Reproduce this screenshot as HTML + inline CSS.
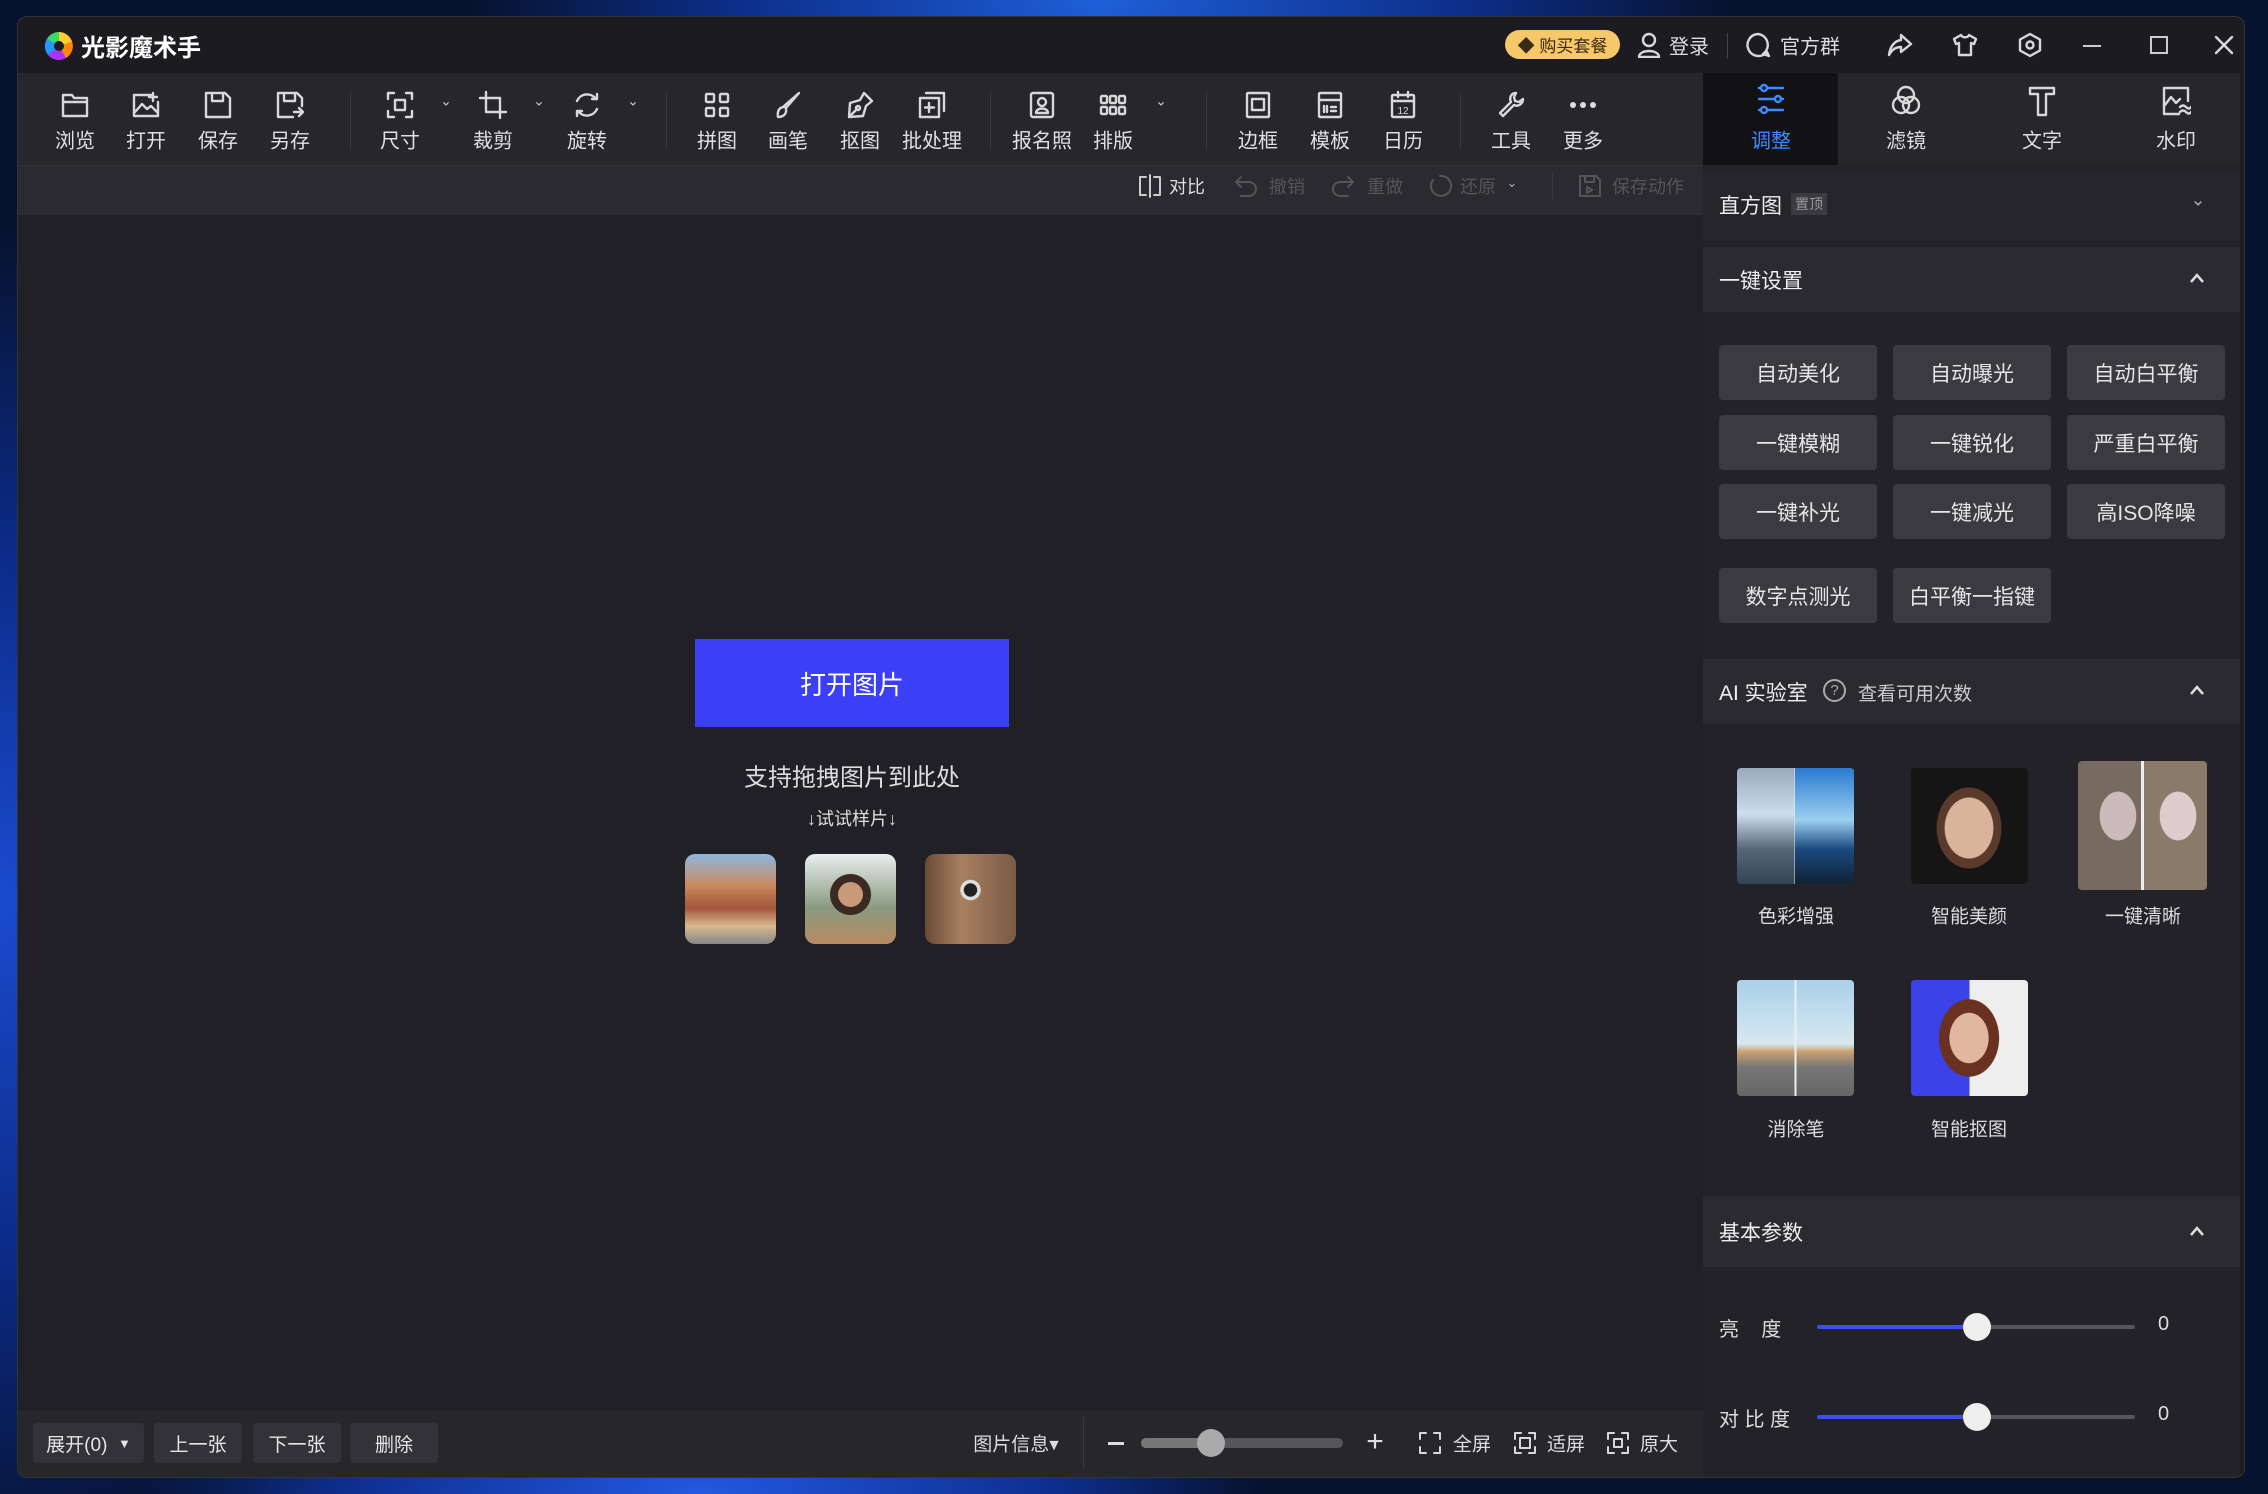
<!DOCTYPE html>
<html><head><meta charset="utf-8">
<style>
*{margin:0;padding:0;box-sizing:border-box}
body{width:2268px;height:1494px;overflow:hidden;position:relative;font-family:"Liberation Sans","Noto Sans CJK SC",sans-serif;color:#ddd;
background:radial-gradient(ellipse 900px 500px at 1100px 0px,#1e5fd8 0%,#0c2f8a 40%,transparent 70%),radial-gradient(ellipse 600px 900px at 0px 900px,#1a4bd0 0%,#0b2a85 40%,transparent 75%),radial-gradient(ellipse 700px 300px at 700px 1494px,#2358e0 0%,#0d2f90 50%,transparent 80%),#07122e;}
.a{position:absolute}
.c{position:absolute;transform:translate(-50%,-50%);white-space:nowrap}
.win{position:absolute;left:17px;top:16px;width:2228px;height:1462px;background:#1c1c20;border-radius:10px;overflow:hidden;border:1px solid #333}
svg{display:block}
.ic{stroke:#d8d8d8;fill:none;stroke-width:2.4;stroke-linecap:round;stroke-linejoin:round}
.lbl{font-size:20px;color:#e0e0e0}
.btn{position:absolute;width:158px;height:55px;background:#3a3a40;border-radius:4px;font-size:21px;color:#e6e6e6;display:flex;align-items:center;justify-content:center}
.hdr{position:absolute;left:0;width:537px;font-size:21px;color:#eee}
.bb{position:absolute;top:1406px;height:40px;background:#323238;border-radius:4px;font-size:19px;color:#e6e6e6;display:flex;align-items:center;justify-content:center}
.th{position:absolute;border-radius:4px;overflow:hidden}
</style></head><body>
<div class="win">
 <div class="a" style="left:0;top:0;width:2230px;height:56px;background:#1c1c20"></div>
 <svg class="a" style="left:26px;top:14px" width="30" height="30" viewBox="0 0 30 30">
  <circle cx="15" cy="15" r="14" fill="#f24"/>
  <path d="M15 15 L15 1 A14 14 0 0 1 28 11 Z" fill="#fc3"/>
  <path d="M15 15 L28 11 A14 14 0 0 1 22 27 Z" fill="#f80"/>
  <path d="M15 15 L22 27 A14 14 0 0 1 4 24 Z" fill="#a3f"/>
  <path d="M15 15 L4 24 A14 14 0 0 1 3 8 Z" fill="#29f"/>
  <path d="M15 15 L3 8 A14 14 0 0 1 15 1 Z" fill="#3d6"/>
  <circle cx="15" cy="15" r="5" fill="#1c1c20"/>
 </svg>
 <div class="a" style="left:63px;top:11px;font-size:24px;font-weight:bold;color:#fff">光影魔术手</div>
 <div class="a" style="left:1487px;top:13px;width:115px;height:29px;border-radius:15px;background:#f6c86a;color:#3a2a10;font-size:17px;display:flex;align-items:center;justify-content:center">◆ 购买套餐</div>
 <svg class="a ic" style="left:1619px;top:15px" width="24" height="26" viewBox="0 0 24 26"><circle cx="12" cy="8" r="6"/><path d="M2 25 C2 17 22 17 22 25 Z"/></svg>
 <div class="c" style="left:1671px;top:28px;font-size:20px">登录</div>
 <div class="a" style="left:1709px;top:16px;width:1px;height:26px;background:#444"></div>
 <svg class="a ic" style="left:1727px;top:15px" width="26" height="26" viewBox="0 0 26 26"><path d="M13 2 A11 11 0 1 0 22 20 L24 24 L18 22 A11 11 0 0 0 13 2"/></svg>
 <div class="c" style="left:1792px;top:28px;font-size:20px">官方群</div>
 <svg class="a ic" style="left:1869px;top:16px" width="26" height="24" viewBox="0 0 26 24"><path d="M14 2 L24 11 L14 19 L14 14 C8 14 5 17 2 22 C3 14 7 8 14 7 Z"/></svg>
 <svg class="a ic" style="left:1934px;top:16px" width="26" height="24" viewBox="0 0 26 24"><path d="M9 2 L2 6 L4 11 L7 10 L7 22 L19 22 L19 10 L22 11 L24 6 L17 2 C16 5 10 5 9 2Z"/></svg>
 <svg class="a ic" style="left:2000px;top:15px" width="24" height="26" viewBox="0 0 24 26"><path d="M12 2 L22 7.5 L22 18.5 L12 24 L2 18.5 L2 7.5 Z"/><circle cx="12" cy="13" r="3.5"/></svg>
 <div class="a" style="left:2065px;top:28px;width:18px;height:2px;background:#ccc"></div>
 <div class="a" style="left:2132px;top:19px;width:18px;height:18px;border:2px solid #ccc"></div>
 <svg class="a ic" style="left:2196px;top:18px" width="20" height="20" viewBox="0 0 20 20"><path d="M2 2 L18 18 M18 2 L2 18"/></svg>

 <div class="a" style="left:0;top:56px;width:1685px;height:92px;background:#26262b"></div>
 <div class="a" style="left:0;top:148px;width:1685px;height:50px;background:#2a2a30;border-top:1px solid #333"></div>
 <div class="a" style="left:0;top:198px;width:1685px;height:1196px;background:#202026"></div>
 <div class="a" style="left:0;top:1394px;width:1685px;height:68px;background:#26262b"></div>

 <svg class="a ic" style="left:42px;top:73px" width="30" height="30" viewBox="0 0 30 30"><path d="M3 5 H12 L14 8 H27 V26 H3 Z M3 12 H27"/></svg>
 <svg class="a ic" style="left:113px;top:73px" width="30" height="30" viewBox="0 0 30 30"><path d="M20 5 H3 V26 H27 V12 M22 3 V11 M18 7 H26 M4 22 L11 14 L16 19 L20 16 L26 22"/></svg>
 <svg class="a ic" style="left:185px;top:73px" width="30" height="30" viewBox="0 0 30 30"><path d="M3 3 H22 L27 8 V27 H3 Z M9 3 V11 H20 V3"/></svg>
 <svg class="a ic" style="left:257px;top:73px" width="30" height="30" viewBox="0 0 30 30"><path d="M18 27 H3 V3 H22 L27 8 V16 M9 3 V11 H20 V3 M19 22 H28 M24 18 L28 22 L24 26"/></svg>
 <div class="a" style="left:332px;top:76px;width:1px;height:56px;background:#3a3a40"></div>
 <svg class="a ic" style="left:367px;top:73px" width="30" height="30" viewBox="0 0 30 30"><path d="M3 9 V3 H9 M21 3 H27 V9 M27 21 V27 H21 M9 27 H3 V21 M10 10 H20 V20 H10 Z"/></svg>
 <svg class="a ic" style="left:460px;top:73px" width="30" height="30" viewBox="0 0 30 30"><path d="M8 2 V22 H28 M2 8 H22 V28"/></svg>
 <svg class="a ic" style="left:554px;top:73px" width="30" height="30" viewBox="0 0 30 30"><path d="M24 9 A11 11 0 0 0 5 11 M6 21 A11 11 0 0 0 25 19 M20 9 H25 V4 M10 21 H5 V26"/></svg>
 <div class="c" style="left:428px;top:84px;font-size:14px;color:#ccc">⌄</div>
 <div class="c" style="left:521px;top:84px;font-size:14px;color:#ccc">⌄</div>
 <div class="c" style="left:615px;top:84px;font-size:14px;color:#ccc">⌄</div>
 <div class="a" style="left:648px;top:76px;width:1px;height:56px;background:#3a3a40"></div>
 <svg class="a ic" style="left:684px;top:73px" width="30" height="30" viewBox="0 0 30 30"><rect x="4" y="4" width="8" height="8" rx="1"/><rect x="18" y="4" width="8" height="8" rx="1"/><rect x="4" y="18" width="8" height="8" rx="1"/><rect x="18" y="18" width="8" height="8" rx="1"/></svg>
 <svg class="a ic" style="left:755px;top:73px" width="30" height="30" viewBox="0 0 30 30"><path d="M26 3 L13 18 L11 16 Z M11 17 C6 17 4 22 5 27 C9 27 14 25 13 19"/></svg>
 <svg class="a ic" style="left:827px;top:73px" width="30" height="30" viewBox="0 0 30 30"><path d="M19 3 L27 11 L21 16 L18 26 L4 27 L5 13 L15 10 Z M4 27 L12 19"/><circle cx="13" cy="18" r="2"/></svg>
 <svg class="a ic" style="left:899px;top:73px" width="30" height="30" viewBox="0 0 30 30"><path d="M9 3 H27 V21 M3 8 H22 V27 H3 Z M12 13 V22 M8 17.5 H17"/></svg>
 <div class="a" style="left:972px;top:76px;width:1px;height:56px;background:#3a3a40"></div>
 <svg class="a ic" style="left:1009px;top:73px" width="30" height="30" viewBox="0 0 30 30"><rect x="4" y="3" width="22" height="24" rx="2"/><circle cx="15" cy="12" r="4"/><path d="M9 23 C9 17 21 17 21 23 Z"/></svg>
 <svg class="a ic" style="left:1080px;top:73px" width="30" height="30" viewBox="0 0 30 30"><rect x="3" y="6" width="6" height="7" rx="1"/><rect x="12" y="6" width="6" height="7" rx="1"/><rect x="21" y="6" width="6" height="7" rx="1"/><rect x="3" y="17" width="6" height="7" rx="1"/><rect x="12" y="17" width="6" height="7" rx="1"/><rect x="21" y="17" width="6" height="7" rx="1"/></svg>
 <div class="c" style="left:1143px;top:84px;font-size:14px;color:#ccc">⌄</div>
 <div class="a" style="left:1188px;top:76px;width:1px;height:56px;background:#3a3a40"></div>
 <svg class="a ic" style="left:1225px;top:73px" width="30" height="30" viewBox="0 0 30 30"><rect x="4" y="3" width="22" height="24" rx="1"/><rect x="9" y="9" width="12" height="11"/></svg>
 <svg class="a ic" style="left:1297px;top:73px" width="30" height="30" viewBox="0 0 30 30"><rect x="4" y="3" width="22" height="24" rx="1"/><path d="M4 10 H26 M9 16 V22 M12 16 V22 M16 17 H21 M16 21 H21"/></svg>
 <svg class="a ic" style="left:1370px;top:73px" width="30" height="30" viewBox="0 0 30 30"><rect x="4" y="5" width="22" height="22" rx="1"/><path d="M4 11 H26 M10 2 V7 M20 2 V7"/><text x="15" y="24" font-size="10" fill="#d8d8d8" stroke="none" text-anchor="middle" font-family="Liberation Sans">12</text></svg>
 <div class="a" style="left:1442px;top:76px;width:1px;height:56px;background:#3a3a40"></div>
 <svg class="a ic" style="left:1478px;top:73px" width="30" height="30" viewBox="0 0 30 30"><path d="M20 3 C15 3 13 8 15 12 L4 23 L7 26 L18 15 C22 17 27 14 27 9 L23 12 L19 11 L18 7 Z"/></svg>
 <svg class="a" style="left:1550px;top:84px" width="30" height="8" viewBox="0 0 30 8"><circle cx="5" cy="4" r="3" fill="#ddd"/><circle cx="15" cy="4" r="3" fill="#ddd"/><circle cx="25" cy="4" r="3" fill="#ddd"/></svg>

 <div class="c lbl" style="left:57px;top:122px">浏览</div>
 <div class="c lbl" style="left:128px;top:122px">打开</div>
 <div class="c lbl" style="left:200px;top:122px">保存</div>
 <div class="c lbl" style="left:272px;top:122px">另存</div>
 <div class="c lbl" style="left:382px;top:122px">尺寸</div>
 <div class="c lbl" style="left:475px;top:122px">裁剪</div>
 <div class="c lbl" style="left:569px;top:122px">旋转</div>
 <div class="c lbl" style="left:699px;top:122px">拼图</div>
 <div class="c lbl" style="left:770px;top:122px">画笔</div>
 <div class="c lbl" style="left:842px;top:122px">抠图</div>
 <div class="c lbl" style="left:914px;top:122px">批处理</div>
 <div class="c lbl" style="left:1024px;top:122px">报名照</div>
 <div class="c lbl" style="left:1095px;top:122px">排版</div>
 <div class="c lbl" style="left:1240px;top:122px">边框</div>
 <div class="c lbl" style="left:1312px;top:122px">模板</div>
 <div class="c lbl" style="left:1385px;top:122px">日历</div>
 <div class="c lbl" style="left:1493px;top:122px">工具</div>
 <div class="c lbl" style="left:1565px;top:122px">更多</div>

 <svg class="a ic" style="left:1119px;top:157px;stroke:#ccc;stroke-width:2" width="26" height="24" viewBox="0 0 26 24"><path d="M9 3 H3 V21 H9 M17 3 H23 V21 H17 M13 1 V23"/></svg>
 <div class="c" style="left:1169px;top:169px;font-size:18px;color:#ddd">对比</div>
 <svg class="a ic" style="left:1215px;top:157px;stroke:#555;stroke-width:2" width="26" height="24" viewBox="0 0 26 24"><path d="M8 3 L3 8 L8 13 M3 8 H16 A7 7 0 0 1 16 22 H8"/></svg>
 <div class="c" style="left:1269px;top:169px;font-size:18px;color:#555">撤销</div>
 <svg class="a ic" style="left:1312px;top:157px;stroke:#555;stroke-width:2" width="26" height="24" viewBox="0 0 26 24"><path d="M18 3 L23 8 L18 13 M23 8 H10 A7 7 0 0 0 10 22 H18"/></svg>
 <div class="c" style="left:1367px;top:169px;font-size:18px;color:#555">重做</div>
 <svg class="a ic" style="left:1409px;top:157px;stroke:#555;stroke-width:2" width="26" height="24" viewBox="0 0 26 24"><path d="M6 6 A10 10 0 1 0 13 2"/></svg>
 <div class="c" style="left:1460px;top:169px;font-size:18px;color:#555">还原</div>
 <div class="c" style="left:1494px;top:166px;font-size:13px;color:#aaa">⌄</div>
 <div class="a" style="left:1534px;top:156px;width:1px;height:26px;background:#3a3a40"></div>
 <svg class="a ic" style="left:1559px;top:157px;stroke:#555;stroke-width:2" width="26" height="24" viewBox="0 0 26 24"><path d="M3 2 H19 L23 6 V22 H3 Z M8 2 V8 H17 V2 M10 13 L15 16 L10 19 Z"/></svg>
 <div class="c" style="left:1630px;top:169px;font-size:18px;color:#555">保存动作</div>

 <div class="a" style="left:677px;top:622px;width:314px;height:88px;background:#3b3ff5;color:#fff;font-size:26px;display:flex;align-items:center;justify-content:center">打开图片</div>
 <div class="c" style="left:834px;top:758px;font-size:24px;color:#ddd">支持拖拽图片到此处</div>
 <div class="c" style="left:834px;top:801px;font-size:18px;color:#ddd">↓试试样片↓</div>
 <div class="th" style="left:667px;top:837px;width:91px;height:90px;background:linear-gradient(180deg,#8fb7e0 0%,#c98a5e 35%,#a4553a 60%,#d8b890 80%,#888 100%);border-radius:10px"></div>
 <div class="th" style="left:787px;top:837px;width:91px;height:90px;background:radial-gradient(circle at 50% 45%,#c99a7a 0 18%,#3a2a22 19% 30%,transparent 31%),linear-gradient(180deg,#e8eef0,#8a9a80 60%,#b88a60);border-radius:10px"></div>
 <div class="th" style="left:907px;top:837px;width:91px;height:90px;background:radial-gradient(circle at 50% 40%,#222 0 9%,#ddd 10% 14%,transparent 15%),linear-gradient(90deg,#6a4a35,#a88060 40%,#7a5a45);border-radius:10px"></div>

 <div class="bb" style="left:15px;width:111px">展开(0)&nbsp;&nbsp;<span style="font-size:13px">▼</span></div>
 <div class="bb" style="left:136px;width:88px">上一张</div>
 <div class="bb" style="left:235px;width:88px">下一张</div>
 <div class="bb" style="left:332px;width:88px">删除</div>
 <div class="c" style="left:998px;top:1426px;font-size:19px">图片信息▾</div>
 <div class="a" style="left:1065px;top:1400px;width:1px;height:52px;background:#3a3a40"></div>
 <div class="a" style="left:1090px;top:1425px;width:16px;height:3px;background:#ddd"></div>
 <div class="a" style="left:1123px;top:1421px;width:202px;height:10px;border-radius:5px;background:#55555a"></div>
 <div class="a" style="left:1123px;top:1421px;width:70px;height:10px;border-radius:5px;background:#777"></div>
 <div class="a" style="left:1179px;top:1412px;width:28px;height:28px;border-radius:50%;background:#aaa"></div>
 <div class="c" style="left:1357px;top:1425px;font-size:30px;color:#ddd">+</div>
 <svg class="a ic" style="left:1400px;top:1414px;stroke-width:2" width="24" height="24" viewBox="0 0 24 24"><path d="M2 8 V2 H8 M16 2 H22 V8 M22 16 V22 H16 M8 22 H2 V16"/></svg>
 <div class="c" style="left:1454px;top:1426px;font-size:19px">全屏</div>
 <svg class="a ic" style="left:1495px;top:1414px;stroke-width:2" width="24" height="24" viewBox="0 0 24 24"><path d="M2 8 V2 H8 M16 2 H22 V8 M22 16 V22 H16 M8 22 H2 V16 M7 7 H17 V17 H7 Z"/></svg>
 <div class="c" style="left:1548px;top:1426px;font-size:19px">适屏</div>
 <svg class="a ic" style="left:1588px;top:1414px;stroke-width:2" width="24" height="24" viewBox="0 0 24 24"><path d="M2 8 V2 H8 M16 2 H22 V8 M22 16 V22 H16 M8 22 H2 V16 M8 8 H16 V16 H8 Z"/></svg>
 <div class="c" style="left:1641px;top:1426px;font-size:19px">原大</div>

 <div class="a" style="left:1685px;top:56px;width:537px;height:1406px;background:#222228">
  <div class="a" style="left:0;top:0;width:537px;height:92px;background:#26262b"></div>
  <div class="a" style="left:0;top:0;width:135px;height:92px;background:#121215"></div>
  <svg class="a" style="left:53px;top:10px;stroke:#3d8bff;fill:none;stroke-width:2.4;stroke-linecap:round" width="30" height="34" viewBox="0 0 30 34"><path d="M3 5 H27 M3 16 H27 M3 27 H27"/><circle cx="8" cy="5" r="3" fill="#121215"/><circle cx="22" cy="16" r="3" fill="#121215"/><circle cx="8" cy="27" r="3" fill="#121215"/></svg>
  <div class="c" style="left:68px;top:66px;font-size:20px;color:#3d8bff">调整</div>
  <svg class="a ic" style="left:188px;top:12px" width="30" height="32" viewBox="0 0 30 32"><circle cx="15" cy="10" r="8"/><circle cx="10" cy="20" r="8"/><circle cx="20" cy="20" r="8"/></svg>
  <div class="c" style="left:203px;top:66px;font-size:20px">滤镜</div>
  <svg class="a ic" style="left:324px;top:12px" width="30" height="32" viewBox="0 0 30 32"><path d="M3 3 H27 V9 H19 V30 H11 V9 H3 Z"/></svg>
  <div class="c" style="left:339px;top:66px;font-size:20px">文字</div>
  <svg class="a ic" style="left:458px;top:12px" width="30" height="32" viewBox="0 0 30 32"><path d="M27 16 V3 H3 V29 H18 M4 20 L10 12 L15 18 L19 14 M19 22 Q22 19 25 22 T30 22 M19 27 Q22 24 25 27 T30 27"/></svg>
  <div class="c" style="left:473px;top:66px;font-size:20px">水印</div>

  <div class="hdr" style="top:99px;height:68px;background:#25252b"><span class="a" style="left:16px;top:18px">直方图</span><span class="a" style="left:88px;top:21px;background:#3a3a40;color:#999;font-size:14px;padding:1px 4px">置顶</span><span class="c" style="left:495px;top:28px;color:#aaa;font-size:18px">⌄</span></div>
  <div class="hdr" style="top:174px;height:65px;background:#2a2a30"><span class="a" style="left:16px;top:18px">一键设置</span><svg class="a" style="left:486px;top:25px" width="16" height="12" viewBox="0 0 16 12"><path d="M2 10 L8 3 L14 10" stroke="#ddd" stroke-width="2.5" fill="none"/></svg></div>
  <div class="btn" style="left:16px;top:272px">自动美化</div>
  <div class="btn" style="left:190px;top:272px">自动曝光</div>
  <div class="btn" style="left:364px;top:272px">自动白平衡</div>
  <div class="btn" style="left:16px;top:342px">一键模糊</div>
  <div class="btn" style="left:190px;top:342px">一键锐化</div>
  <div class="btn" style="left:364px;top:342px">严重白平衡</div>
  <div class="btn" style="left:16px;top:411px">一键补光</div>
  <div class="btn" style="left:190px;top:411px">一键减光</div>
  <div class="btn" style="left:364px;top:411px">高ISO降噪</div>
  <div class="btn" style="left:16px;top:495px">数字点测光</div>
  <div class="btn" style="left:190px;top:495px">白平衡一指键</div>

  <div class="hdr" style="top:586px;height:65px;background:#2a2a30"><span class="a" style="left:16px;top:18px">AI 实验室</span><span class="a" style="left:120px;top:20px;width:23px;height:23px;border:2px solid #aaa;border-radius:50%;font-size:15px;color:#aaa;text-align:center;line-height:19px">?</span><span class="a" style="left:155px;top:20px;font-size:19px;color:#ccc">查看可用次数</span><svg class="a" style="left:486px;top:25px" width="16" height="12" viewBox="0 0 16 12"><path d="M2 10 L8 3 L14 10" stroke="#ddd" stroke-width="2.5" fill="none"/></svg></div>
  <div class="th" style="left:34px;top:695px;width:117px;height:116px;background:linear-gradient(90deg,transparent 49%,#eee 49% 51%,transparent 51%),linear-gradient(180deg,#9ab 0%,#cde 40%,#567 70%,#345 100%)"><div class="a" style="left:58px;top:0;width:59px;height:116px;background:linear-gradient(180deg,#2a7ad0,#9cd0f0 45%,#1a4a80 70%,#123 100%)"></div></div>
  <div class="th" style="left:208px;top:695px;width:117px;height:116px;background:radial-gradient(ellipse 40px 50px at 58px 60px,#d9b39a 0 60%,#5a3a2a 62% 80%,transparent 82%),#151515"></div>
  <div class="th" style="left:375px;top:688px;width:129px;height:129px;background:radial-gradient(ellipse 30px 40px at 40px 55px,#cbb 0 60%,transparent 62%),radial-gradient(ellipse 30px 40px at 100px 55px,#dcc 0 60%,transparent 62%),linear-gradient(90deg,#776a60 49%,#eee 49% 51%,#8a7a6a 51%)"></div>
  <div class="c" style="left:93px;top:842px;font-size:19px">色彩增强</div>
  <div class="c" style="left:266px;top:842px;font-size:19px">智能美颜</div>
  <div class="c" style="left:440px;top:842px;font-size:19px">一键清晰</div>
  <div class="th" style="left:34px;top:907px;width:117px;height:116px;background:linear-gradient(90deg,transparent 49%,#eee 49% 51%,transparent 51%),linear-gradient(180deg,#a9d0ea 0%,#d8e8f0 55%,#c9a070 62%,#777 75%,#666 100%)"></div>
  <div class="th" style="left:208px;top:907px;width:117px;height:116px;background:radial-gradient(ellipse 35px 45px at 58px 58px,#e0b8a0 0 55%,#6a3020 57% 85%,transparent 87%),linear-gradient(90deg,#3b42e8 50%,#eee 50%)"></div>
  <div class="c" style="left:93px;top:1055px;font-size:19px">消除笔</div>
  <div class="c" style="left:266px;top:1055px;font-size:19px">智能抠图</div>

  <div class="hdr" style="top:1123px;height:71px;background:#2a2a30"><span class="a" style="left:16px;top:21px">基本参数</span><svg class="a" style="left:486px;top:29px" width="16" height="12" viewBox="0 0 16 12"><path d="M2 10 L8 3 L14 10" stroke="#ddd" stroke-width="2.5" fill="none"/></svg></div>
  <div class="a" style="left:16px;top:1240px;font-size:20px">亮&nbsp;&nbsp;&nbsp;&nbsp;度</div>
  <div class="a" style="left:114px;top:1252px;width:318px;height:4px;background:#55555a;border-radius:2px"></div>
  <div class="a" style="left:114px;top:1252px;width:160px;height:4px;background:#3b4ff5;border-radius:2px"></div>
  <div class="a" style="left:260px;top:1240px;width:28px;height:28px;border-radius:50%;background:#eee"></div>
  <div class="a" style="left:455px;top:1240px;font-size:20px">0</div>
  <div class="a" style="left:16px;top:1330px;font-size:20px">对 比 度</div>
  <div class="a" style="left:114px;top:1342px;width:318px;height:4px;background:#55555a;border-radius:2px"></div>
  <div class="a" style="left:114px;top:1342px;width:160px;height:4px;background:#3b4ff5;border-radius:2px"></div>
  <div class="a" style="left:260px;top:1330px;width:28px;height:28px;border-radius:50%;background:#eee"></div>
  <div class="a" style="left:455px;top:1330px;font-size:20px">0</div>
 </div>
</div>
</body></html>
